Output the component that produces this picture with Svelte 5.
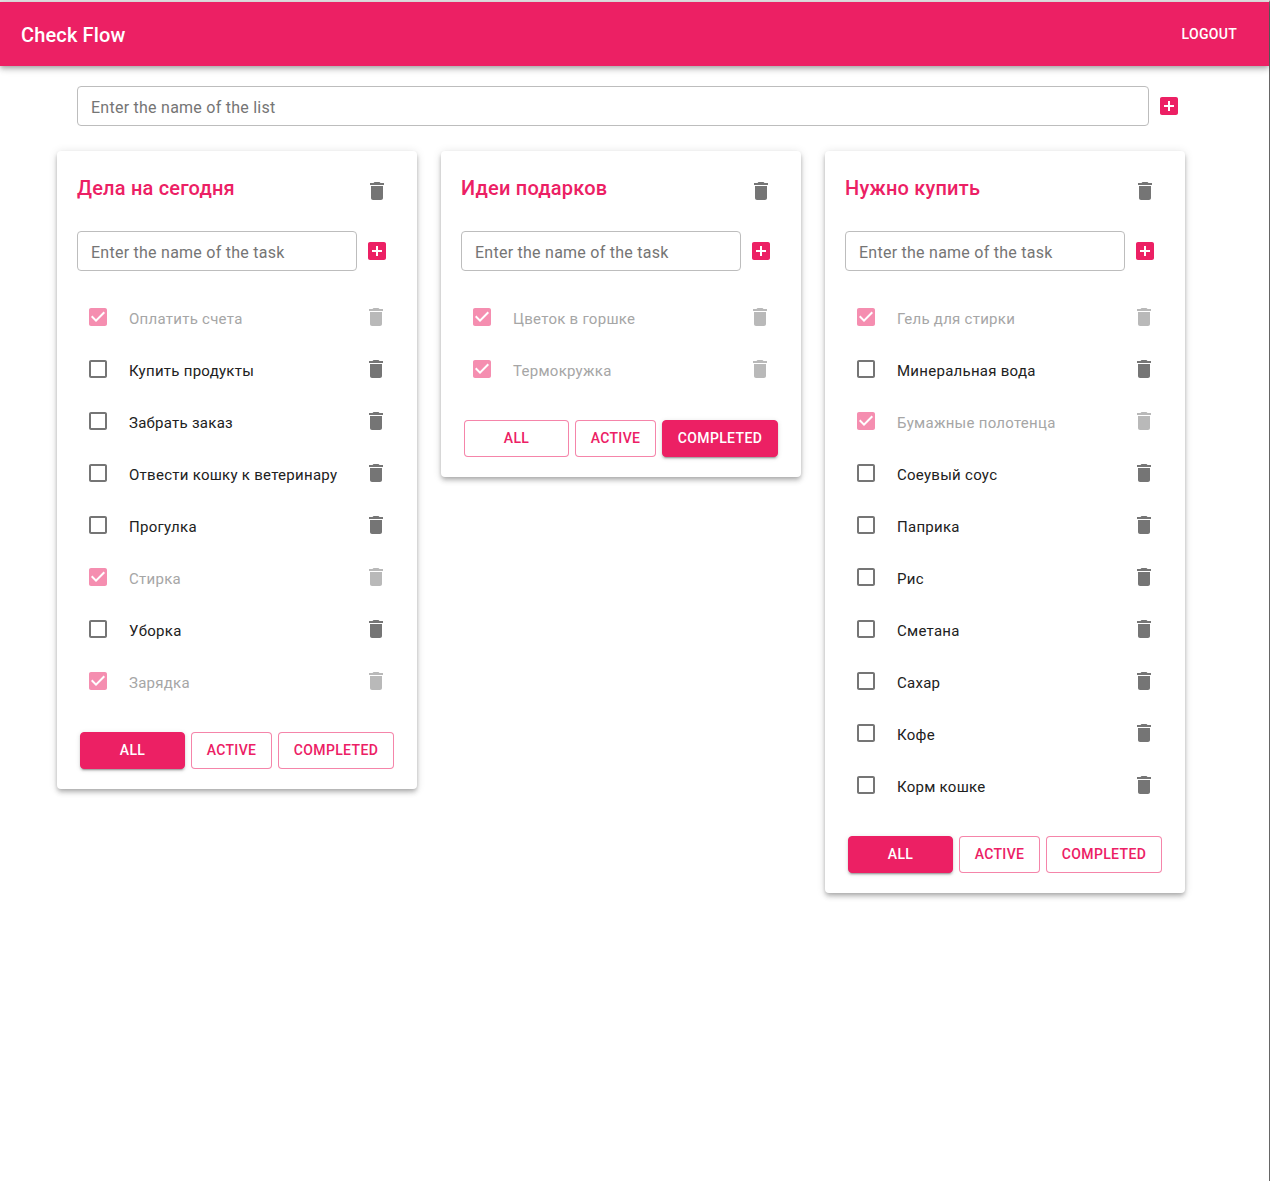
<script>
  const lists = [
    {
      title: 'Дела на сегодня',
      filter: 'all',
      tasks: [
        ['Оплатить счета', true],
        ['Купить продукты', false],
        ['Забрать заказ', false],
        ['Отвести кошку к ветеринару', false],
        ['Прогулка', false],
        ['Стирка', true],
        ['Уборка', false],
        ['Зарядка', true],
      ],
    },
    {
      title: 'Идеи подарков',
      filter: 'completed',
      tasks: [
        ['Цветок в горшке', true],
        ['Термокружка', true],
      ],
    },
    {
      title: 'Нужно купить',
      filter: 'all',
      tasks: [
        ['Гель для стирки', true],
        ['Минеральная вода', false],
        ['Бумажные полотенца', true],
        ['Соеувый соус', false],
        ['Паприка', false],
        ['Рис', false],
        ['Сметана', false],
        ['Сахар', false],
        ['Кофе', false],
        ['Корм кошке', false],
      ],
    },
  ];
  const filters = ['all', 'active', 'completed'];
  const trash = 'M6 19c0 1.1.9 2 2 2h8c1.1 0 2-.9 2-2V7H6v12zM19 4h-3.5l-1-1h-5l-1 1H5v2h14V4z';
  const plus = 'M19 3H5c-1.11 0-2 .9-2 2v14c0 1.1.89 2 2 2h14c1.1 0 2-.9 2-2V5c0-1.1-.9-2-2-2zm-2 10h-4v4h-2v-4H7v-2h4V7h2v4h4v2z';
  const boxEmpty = 'M19 5v14H5V5h14m0-2H5c-1.1 0-2 .9-2 2v14c0 1.1.9 2 2 2h14c1.1 0 2-.9 2-2V5c0-1.1-.9-2-2-2z';
  const boxChecked = 'M19 3H5c-1.11 0-2 .9-2 2v14c0 1.1.89 2 2 2h14c1.11 0 2-.9 2-2V5c0-1.1-.89-2-2-2zm-9 14l-5-5 1.41-1.41L10 14.17l7.59-7.59L19 8l-9 9z';
</script>

{#snippet icon(d, cls)}
  <svg class={cls} viewBox="0 0 24 24" width="24" height="24" aria-hidden="true"><path {d} /></svg>
{/snippet}

<div class="app">
  <header class="bar">
    <h1>Check Flow</h1>
    <button type="button" class="logout">Logout</button>
  </header>

  <main class="content">
    <div class="add-list">
      <input class="field" placeholder="Enter the name of the list" />
      <button type="button" class="icon-btn">{@render icon(plus, 'ic-accent')}</button>
    </div>

    <div class="columns">
      {#each lists as list}
        <section class="card">
          <div class="card-head">
            <h2>{list.title}</h2>
            <button type="button" class="icon-btn">{@render icon(trash, 'ic-grey')}</button>
          </div>
          <div class="add-task">
            <input class="field" placeholder="Enter the name of the task" />
            <button type="button" class="icon-btn">{@render icon(plus, 'ic-accent')}</button>
          </div>
          <ul class="tasks">
            {#each list.tasks as [name, done]}
              <li class:done>
                <span class="check">{@render icon(done ? boxChecked : boxEmpty, done ? 'ic-accent' : 'ic-grey')}</span>
                <span class="name">{name}</span>
                <button type="button" class="icon-btn row-del">{@render icon(trash, 'ic-grey')}</button>
              </li>
            {/each}
          </ul>
          <div class="filters">
            {#each filters as f}
              <button type="button" class="filter {f}" class:on={list.filter === f}>{f}</button>
            {/each}
          </div>
        </section>
      {/each}
    </div>
  </main>
</div>

<style>
  :global(body) {
    margin: 0;
    background: #fff;
    font-family: Roboto, "Noto Sans", sans-serif;
  }
  .app {
    min-height: 1181px;
    box-sizing: border-box;
    border-top: 2px solid #e4e4e4;
    border-right: 1px solid #666;
  }
  .bar {
    height: 64px;
    box-sizing: border-box;
    background: #ec2064;
    box-shadow: 0 2px 4px -1px rgba(0,0,0,.2), 0 4px 5px 0 rgba(0,0,0,.14), 0 1px 10px 0 rgba(0,0,0,.12);
    display: flex;
    align-items: center;
    justify-content: space-between;
    padding: 2px 24px 0 21px;
    position: relative;
  }
  h1 {
    margin: 0;
    color: #fff;
    font-size: 20px;
    font-weight: 500;
    line-height: 1.6;
    letter-spacing: .15px;
  }
  .logout {
    background: none;
    border: 0;
    padding: 6px 8px;
    margin-top: -1px;
    color: #fff;
    font: 500 14px/1.75 Roboto, sans-serif;
    letter-spacing: .3px;
    text-transform: uppercase;
  }
  .content {
    padding-top: 20px;
  }
  .add-list {
    display: flex;
    align-items: center;
    gap: 8px;
    margin-left: 77px;
    width: 1104px;
  }
  .add-list .field { flex: 1; }
  .add-list .icon-btn { margin-top: -1px; }
  .field {
    height: 40px;
    box-sizing: border-box;
    min-width: 0;
    padding: 2px 13px 0;
    border: 1px solid #bdbdbd;
    border-radius: 4px;
    outline: none;
    background: #fff;
    color: #333;
    font: 400 16px Roboto, sans-serif;
    letter-spacing: .25px;
  }
  .field::placeholder { color: #757575; opacity: 1; }
  .icon-btn {
    display: flex;
    flex: none;
    width: 24px;
    height: 24px;
    padding: 0;
    border: 0;
    background: none;
  }
  .ic-accent { fill: #ec2064; }
  .ic-grey { fill: #757575; }
  .columns {
    display: flex;
    align-items: flex-start;
    gap: 24px;
    margin: 25px 0 0 57px;
  }
  .card {
    width: 360px;
    box-sizing: border-box;
    padding: 20px;
    border-radius: 4px;
    background: #fff;
    box-shadow: 0 2px 4px -1px rgba(0,0,0,.2), 0 4px 5px 0 rgba(0,0,0,.14), 0 1px 10px 0 rgba(0,0,0,.12);
  }
  .card-head {
    display: flex;
    align-items: center;
    justify-content: space-between;
    height: 40px;
    padding-right: 8px;
  }
  h2 {
    margin: -6px 0 0;
    color: #ec2064;
    font-size: 20px;
    font-weight: 500;
    line-height: 1.6;
    letter-spacing: .2px;
  }
  .add-task {
    display: flex;
    align-items: center;
    gap: 8px;
    margin-top: 20px;
  }
  .add-task .field { width: 280px; }
  .add-task .icon-btn { margin-top: -1px; }
  .tasks {
    list-style: none;
    margin: 20px 0 0;
    padding: 0;
  }
  li {
    display: flex;
    align-items: center;
    height: 52px;
    color: #212121;
    font-size: 15px;
    letter-spacing: .27px;
  }
  .check {
    display: flex;
    margin: -1px 0 0 9px;
  }
  .name {
    flex: 1;
    margin-left: 19px;
    padding-top: 3px;
  }
  .row-del { margin: -1px 9px 0 0; }
  li.done .name { color: #a6a6a6; }
  li.done .check { opacity: .5; }
  li.done .row-del { opacity: .5; }
  .filters {
    display: flex;
    gap: 6px;
    margin: 25px 0 0 3px;
  }
  .filter {
    height: 37px;
    box-sizing: border-box;
    padding: 0 0 2px;
    border: 1px solid rgba(236,32,100,.55);
    border-radius: 4px;
    background: #fff;
    color: #ec2064;
    font: 500 14px Roboto, sans-serif;
    letter-spacing: .35px;
    text-transform: uppercase;
  }
  .filter.all { width: 105px; }
  .filter.active { width: 81px; }
  .filter.completed { width: 116px; }
  .filter.on {
    border-color: #ec2064;
    background: #ec2064;
    color: #fff;
    box-shadow: 0 3px 1px -2px rgba(0,0,0,.2), 0 2px 2px 0 rgba(0,0,0,.14), 0 1px 5px 0 rgba(0,0,0,.12);
  }
</style>
